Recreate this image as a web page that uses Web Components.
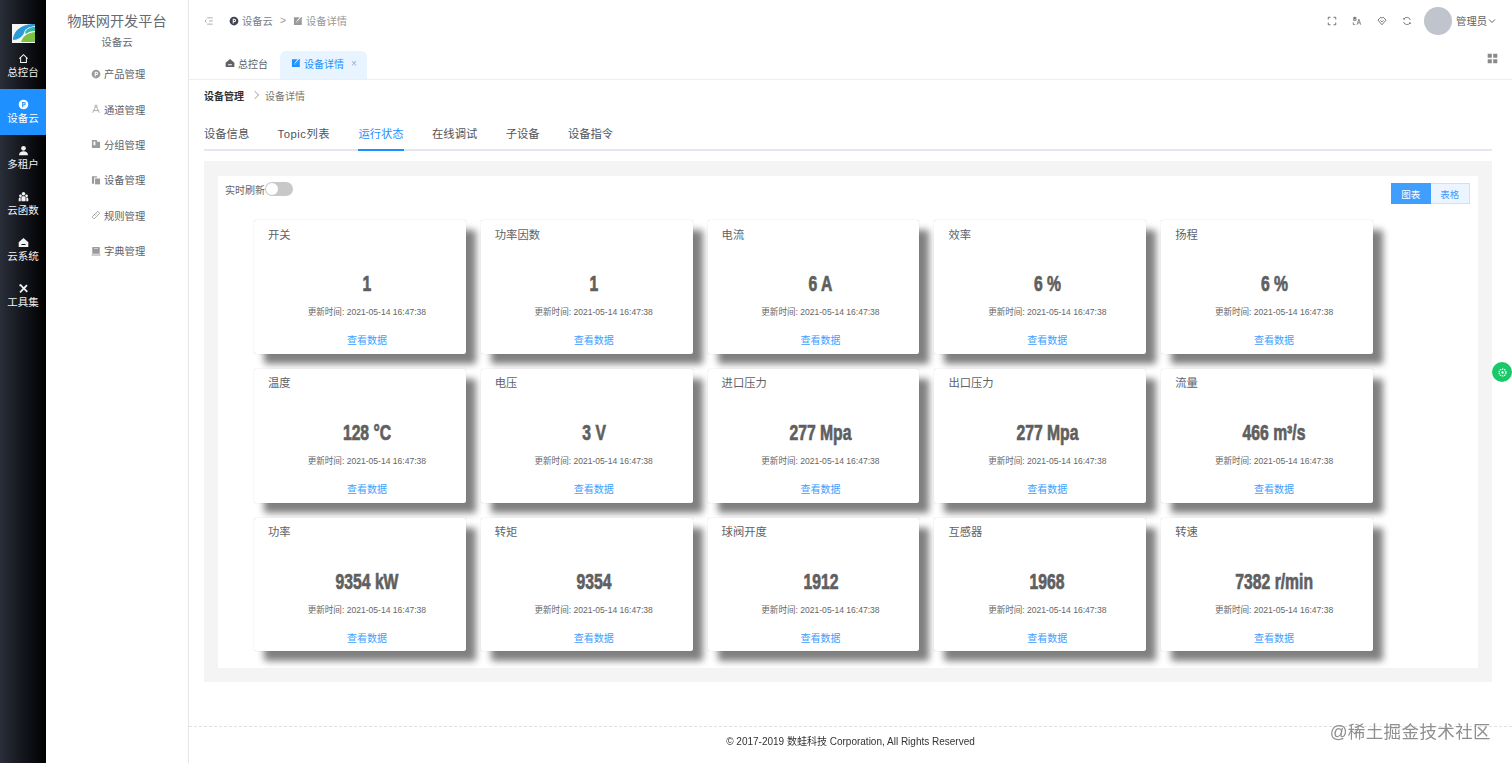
<!DOCTYPE html>
<html lang="zh-CN">
<head>
<meta charset="utf-8">
<title>设备详情</title>
<style>
  html, body { margin: 0; height: 100%; overflow: hidden; background: #fff; }
  body {
    display: flex;
    font-family: "Liberation Sans", "Noto Sans CJK SC", sans-serif;
    color: #606266;
  }
  iot-main { flex: 1; min-width: 0; }
</style>
</head>
<body>
<iot-rail>
  <iot-rail-item icon="home" label="总控台"></iot-rail-item>
  <iot-rail-item icon="p" label="设备云" active></iot-rail-item>
  <iot-rail-item icon="user" label="多租户"></iot-rail-item>
  <iot-rail-item icon="group" label="云函数"></iot-rail-item>
  <iot-rail-item icon="house" label="云系统"></iot-rail-item>
  <iot-rail-item icon="tools" label="工具集"></iot-rail-item>
</iot-rail>
<iot-subnav>
  <iot-subnav-item icon="p">产品管理</iot-subnav-item>
  <iot-subnav-item icon="compass">通道管理</iot-subnav-item>
  <iot-subnav-item icon="folder">分组管理</iot-subnav-item>
  <iot-subnav-item icon="copy">设备管理</iot-subnav-item>
  <iot-subnav-item icon="ruler">规则管理</iot-subnav-item>
  <iot-subnav-item icon="book">字典管理</iot-subnav-item>
</iot-subnav>
<iot-main>
  <iot-topbar></iot-topbar>
  <iot-tabstrip></iot-tabstrip>
  <iot-page>
    <iot-stat-card title="开关" value="1"></iot-stat-card>
    <iot-stat-card title="功率因数" value="1"></iot-stat-card>
    <iot-stat-card title="电流" value="6 A"></iot-stat-card>
    <iot-stat-card title="效率" value="6 %"></iot-stat-card>
    <iot-stat-card title="扬程" value="6 %"></iot-stat-card>
    <iot-stat-card title="温度" value="128 °C"></iot-stat-card>
    <iot-stat-card title="电压" value="3 V"></iot-stat-card>
    <iot-stat-card title="进口压力" value="277 Mpa"></iot-stat-card>
    <iot-stat-card title="出口压力" value="277 Mpa"></iot-stat-card>
    <iot-stat-card title="流量" value="466 m³/s"></iot-stat-card>
    <iot-stat-card title="功率" value="9354 kW"></iot-stat-card>
    <iot-stat-card title="转矩" value="9354"></iot-stat-card>
    <iot-stat-card title="球阀开度" value="1912"></iot-stat-card>
    <iot-stat-card title="互感器" value="1968"></iot-stat-card>
    <iot-stat-card title="转速" value="7382 r/min"></iot-stat-card>
  </iot-page>
</iot-main>
<iot-float></iot-float>

<script>
(() => {
  const ICONS = {
    home: `<path d="M2 8.200 8 2.500l6 5.700M3.800 7v6.800h8.400V7" fill="none" stroke="currentColor" stroke-width="1.500"/>`,
    p: `<path fill-rule="evenodd" d="M8 1a7 7 0 1 1 0 14A7 7 0 0 1 8 1zM6 4.500V12h1.600V9.500h1.200a2.500 2.500 0 0 0 0-5zm1.600 1.400h1.100a1.100 1.100 0 0 1 0 2.200H7.600z" fill="currentColor"/>`,
    user: `<circle cx="8" cy="4.800" r="3.400" fill="currentColor"/><path d="M1.500 15c0-4 2.600-6 6.500-6s6.500 2 6.500 6z" fill="currentColor"/>`,
    group: `<circle cx="8" cy="4" r="2.600" fill="currentColor"/><circle cx="3.600" cy="7" r="2" fill="currentColor"/><circle cx="12.400" cy="7" r="2" fill="currentColor"/><path d="M5 15V9.500c0-1.400 1.200-2 3-2s3 .6 3 2V15zM1 15v-3.500C1 10 2 9.500 4 9.500V15zM15 15v-3.500c0-1.500-1-2-3-2V15z" fill="currentColor"/>`,
    house: `<path fill-rule="evenodd" d="M8 1.500 15 7.500v7H1v-7zM5 10v1.500h6V10z" fill="currentColor"/>`,
    tools: `<path d="M3 2.500 13.500 13M13 3 3 13.500" stroke="currentColor" stroke-width="2.600" fill="none"/><path d="M2 2l3 .5-2.500 2.500z" fill="currentColor"/>`,
    compass: `<circle cx="8" cy="3.500" r="1.800" fill="none" stroke="currentColor" stroke-width="1.300"/><path d="M7 5 2.500 14M9 5l4.500 9M4 10.500h8" fill="none" stroke="currentColor" stroke-width="1.300"/>`,
    folder: `<path fill-rule="evenodd" d="M1.500 1.500h8v3h5v10h-13zM4 4v6h3V4z" fill="currentColor"/>`,
    copy: `<path d="M1.500 2h8v2H5v10H1.500z" fill="currentColor"/><path d="M6.500 5.500h8V15h-8z" fill="currentColor"/>`,
    ruler: `<path d="M1.800 11 10.800 2l3.200 3.200-9 9zM8 5.500l1.500 1.500M5.800 7.700l1.500 1.500" fill="none" stroke="currentColor" stroke-width="1.300"/>`,
    book: `<path fill-rule="evenodd" d="M2 1.500h12v11H2zM1 13.500h14V15H1zM5 3.500v1h6v-1z" fill="currentColor"/>`,
    edit: `<path d="M1.500 2h9L6 7.500 5.500 10.500 8.500 10l5.500-6v10.500h-12.500z" fill="currentColor"/><path d="M13.200 1.500 15 3.200 8 10.300 6.200 10.500 6.400 8.700z" fill="currentColor"/>`,
    fold: `<path d="M5 3h9M8 8h6M5 13h9M4 5.500 1.500 8 4 10.500" fill="none" stroke="currentColor" stroke-width="1.200"/>`,
    expand: `<path d="M5.500 2H2v3.500M10.500 2H14v3.500M5.500 14H2v-3.500M10.500 14H14v-3.500" fill="none" stroke="currentColor" stroke-width="1.500"/>`,
    lang: `<path d="M2 2.500h5M4.500 1v5M2.500 4h4v3h-4zM2 10v3.500h3M11 5l-3 9M11 5l3 9M9 11h4" fill="none" stroke="currentColor" stroke-width="1.200"/>`,
    skin: `<path d="M1.500 6.500 6 2l2 1.500L10 2l4.500 4.500L8 14zM5.500 7 8 9.500 10.500 7" fill="none" stroke="currentColor" stroke-width="1.400"/>`,
    refresh: `<path d="M13.500 6.500A5.800 5.800 0 0 0 3 5M2.500 9.500A5.800 5.800 0 0 0 13 11" fill="none" stroke="currentColor" stroke-width="1.300"/><path d="M1.800 2.800 2.500 6l3-.8zM14.200 13.200 13.500 10l-3 .8z" fill="currentColor"/>`,
    grid: `<path d="M1 1h6v6H1zM9 1h6v6H9zM1 9h6v6H1zM9 9h6v6H9z" fill="currentColor"/>`,
  };

  const icon = (name, size) =>
    `<svg viewBox="0 0 16 16" width="${size}" height="${size}" aria-hidden="true" style="display:block;flex:none">${ICONS[name]}</svg>`;

  // small helper so each element only declares its css + markup
  function define(tag, css, render) {
    customElements.define(tag, class extends HTMLElement {
      connectedCallback() {
        if (this.shadowRoot) return;
        this.attachShadow({ mode: "open" }).innerHTML = `<style>${css}</style>${render(this)}`;
      }
    });
  }

  define("iot-rail", `
    :host {
      display: block; flex: none; width: 46px; height: 100%;
      background: linear-gradient(90deg, #2a2e39 0%, #16181f 45%, #000 100%);
      padding-top: 24px; box-sizing: border-box;
    }
    .logo { display: block; width: 23px; height: 19px; margin: 0 0 0 12px; }
  `, () => `
    <svg class="logo" viewBox="0 0 23 19" aria-hidden="true">
      <rect width="23" height="19" fill="#f4f7f6"/>
      <path d="M1 14C3 6 9 1 20 0h3v2c-7 1-10 3-11 7-2 4-6 7-11 7z" fill="#2a9bd8"/>
      <path d="M9 18c2-6 6-9 14-10v10z" fill="#7cc242"/>
      <path d="M13 8c2-3 5-5 10-5v4c-4 0-7 1-9 3z" fill="#35b5a8"/>
    </svg>
    <slot></slot>`);

  define("iot-rail-item", `
    :host {
      display: flex; flex-direction: column; align-items: center; justify-content: center;
      height: 46px; padding-bottom: 1px; box-sizing: border-box;
      color: #f2f2f2; font-size: 10.500px; line-height: 14px;
    }
    :host([active]) { background: #1e90ff; color: #fff; }
  `, (el) => `${icon(el.getAttribute("icon"), 11)}<span style="margin-top:1px">${el.getAttribute("label")}</span>`);

  define("iot-subnav", `
    :host {
      display: block; flex: none; width: 143px; height: 100%; box-sizing: border-box;
      border-right: 1px solid #e6e6e6; background: #fff; text-align: center;
    }
    .title { font-size: 14.200px; line-height: 20px; padding-top: 11px; color: #666a72; }
    .sub { font-size: 10.500px; line-height: 14px; margin-top: 4px; color: #666a72; }
    .list { margin-top: 7px; }
  `, () => `
    <div class="title">物联网开发平台</div>
    <div class="sub">设备云</div>
    <div class="list"><slot></slot></div>`);

  define("iot-subnav-item", `
    :host {
      display: flex; align-items: center; height: 35.400px;
      padding-left: 45px; gap: 3px; font-size: 10.300px; color: #606266;
    }
    .ic { color: #9b9b9b; width: 10px; }
  `, (el) => `<span class="ic">${icon(el.getAttribute("icon"), 10)}</span><slot></slot>`);

  define("iot-topbar", `
    :host {
      display: flex; align-items: center; height: 41px; box-sizing: border-box;
      padding: 0 16px 0 15px; font-size: 10.300px; color: #7d8087;
    }
    .crumb { display: flex; align-items: center; gap: 3px; }
    .fold { color: #909399; margin-right: 15px; }
    .sep { margin: 0 7px 0 7px; color: #999; }
    .p { color: #3f4450; }
    .right { margin-left: auto; display: flex; align-items: center; color: #666; }
    .right svg { margin-right: 15px; }
    .avatar { width: 28px; height: 28px; border-radius: 50%; background: #c0c4cc; margin-left: -3px; }
    .name { margin-left: 4px; color: #606266; }
    .right .caret { width: 8px; height: 8px; margin: 0 0 0 1px; }
  `, () => `
    <span class="fold">${icon("fold", 10)}</span>
    <span class="crumb"><span class="p">${icon("p", 10)}</span><span>设备云</span></span>
    <span class="sep">&gt;</span>
    <span class="crumb"><span style="color:#999">${icon("edit", 10)}</span><span style="color:#999">设备详情</span></span>
    <div class="right">
      ${icon("expand", 10)}${icon("lang", 10)}${icon("skin", 10)}${icon("refresh", 10)}
      <span class="avatar"></span>
      <span class="name">管理员</span>
      <svg class="caret" viewBox="0 0 8 8" aria-hidden="true"><path d="M1 2.500 4 5.500 7 2.500" fill="none" stroke="#606266"/></svg>
    </div>`);

  define("iot-tabstrip", `
    :host {
      display: flex; align-items: flex-end; height: 39px; box-sizing: border-box;
      padding-left: 25px; border-bottom: 1px solid #eceef1; position: relative; font-size: 10px;
    }
    .tab { display: flex; align-items: center; gap: 3px; height: 28px; padding: 0 12px 4px 11px; box-sizing: border-box; color: #606266; }
    .tab.on { background: #e8f4ff; color: #1e90ff; border-radius: 6px 6px 0 0; padding: 0 10px 4px 11px; width: 87px; }
    .x { margin-left: 4px; font-size: 10px; color: #7db4ee; }
    .more { position: absolute; right: 14px; top: 12px; color: #8a8a8a; }
  `, () => `
    <span class="tab">${icon("house", 10)}<span>总控台</span></span>
    <span class="tab on">${icon("edit", 10)}<span>设备详情</span><span class="x">×</span></span>
    <span class="more">${icon("grid", 11)}</span>`);

  define("iot-page", `
    :host { display: block; padding: 0 20px 0 15px; box-sizing: border-box; }
    .crumbs { display: flex; align-items: center; height: 30px; margin-bottom: 4px; font-size: 10px; color: #777; }
    .crumbs b { color: #303133; font-weight: 700; }
    .crumbs i { width: 5px; height: 5px; margin: 0 7px 0 8px; border: solid #bbb; border-width: 1px 1px 0 0; transform: rotate(45deg); }
    nav { display: flex; gap: 28.400px; height: 37px; padding-top: 2px; box-sizing: border-box; border-bottom: 2px solid #e4e7ed; font-size: 11.300px; align-items: stretch; }
    nav a { display: flex; align-items: center; color: #50535a; margin-bottom: -2px; border-bottom: 2px solid transparent; }
    nav a.on { color: #1e90ff; border-color: #1e90ff; }
    .topic { letter-spacing: .5px; }
    .panel { margin-top: 10px; background: #f4f4f5; padding: 15px 14px 14px; }
    .inner { background: #fff; height: 492px; box-sizing: border-box; position: relative; padding: 44px 0 0 36px; }
    .bar { position: absolute; left: 7px; right: 8px; top: 1px; height: 24px; display: flex; align-items: center; font-size: 10px; color: #666; }
    .switch { width: 28px; height: 14px; border-radius: 7px; background: #c8c8c8; position: relative; }
    .switch::before { content: ""; position: absolute; left: 0; top: 0; width: 12px; height: 12px; margin: 1px; border-radius: 50%; background: #fff; }
    .group { margin-left: auto; align-self: flex-start; display: flex; font-size: 9.500px; height: 21px; margin-top: 6px; }
    .group span { display: flex; align-items: center; justify-content: center; box-sizing: border-box; width: 39.500px; border: 1px solid #c9e3fb; }
    .group .a { background: #409eff; color: #fff; border-color: #409eff; }
    .group .b { background: #ecf5ff; color: #409eff; border-left: 0; }
    .grid { display: grid; grid-template-columns: repeat(5, 211.800px); grid-auto-rows: 133.800px; gap: 15px; }
  `, () => `
    <div class="crumbs"><b>设备管理</b><i></i><span>设备详情</span></div>
    <nav>
      <a>设备信息</a><a class="topic">Topic列表</a><a class="on">运行状态</a><a>在线调试</a><a>子设备</a><a>设备指令</a>
    </nav>
    <div class="panel">
      <div class="inner">
        <div class="bar">
          <span>实时刷新</span><span class="switch"></span>
          <span class="group"><span class="a">图表</span><span class="b">表格</span></span>
        </div>
        <div class="grid"><slot></slot></div>
      </div>
    </div>`);

  define("iot-stat-card", `
    :host {
      display: flex; flex-direction: column; align-items: center; box-sizing: border-box;
      padding-left: 14px;
      background: #fff; border-radius: 2px;
      box-shadow: 0 0 1px rgba(0, 0, 0, .3), 10px 10px 7px #808080;
      color: #606266; position: relative;
    }
    .t { align-self: flex-start; padding: 6.500px 0 0 0; font-size: 11.300px; line-height: 16px; }
    .v {
      margin-top: 27.500px; height: 28px; line-height: 28px; white-space: nowrap;
      font-weight: 700; font-size: 21.500px;
      color: #5f5f5f; -webkit-text-stroke: .7px #5f5f5f;
      transform: scaleX(.73); transform-origin: center;
    }
    .u { margin-top: 7px; font-size: 8.550px; line-height: 14px; color: #666; }
    .l { margin-top: 15px; font-size: 10px; line-height: 14px; color: #409eff; }
  `, (el) => `
    <div class="t">${el.getAttribute("title")}</div>
    <div class="v">${el.getAttribute("value")}</div>
    <div class="u">更新时间: 2021-05-14 16:47:38</div>
    <div class="l">查看数据</div>`);

  define("iot-float", `
    :host { display: block; }
    .dot {
      position: fixed; left: 1492px; top: 362px; width: 20px; height: 20px; border-radius: 50%;
      background: #19c866; color: #fff; display: flex; align-items: center; justify-content: center;
    }
    .foot {
      position: fixed; left: 189px; right: 0; top: 726px; height: 37px; box-sizing: border-box;
      border-top: 1px dashed #e0e0e0; display: flex; align-items: center; justify-content: center;
      font-size: 10px; color: #333; padding-bottom: 10px;
    }
    .mark { position: fixed; right: 21px; top: 720px; font-size: 17.500px; line-height: 24px; color: #8f8f8f; letter-spacing: .4px; }
  `, () => `
    <div class="dot"><svg viewBox="0 0 10 10" width="9" height="9" aria-hidden="true"><circle cx="5" cy="5" r="3.800" fill="none" stroke="#fff" stroke-width="1.400" stroke-dasharray="1.600 .8"/><circle cx="5" cy="5" r="1.300" fill="#fff"/></svg></div>
    <div class="foot">© 2017-2019 数蛙科技 Corporation, All Rights Reserved</div>
    <div class="mark">@稀土掘金技术社区</div>`);
})();
</script>
</body>
</html>
